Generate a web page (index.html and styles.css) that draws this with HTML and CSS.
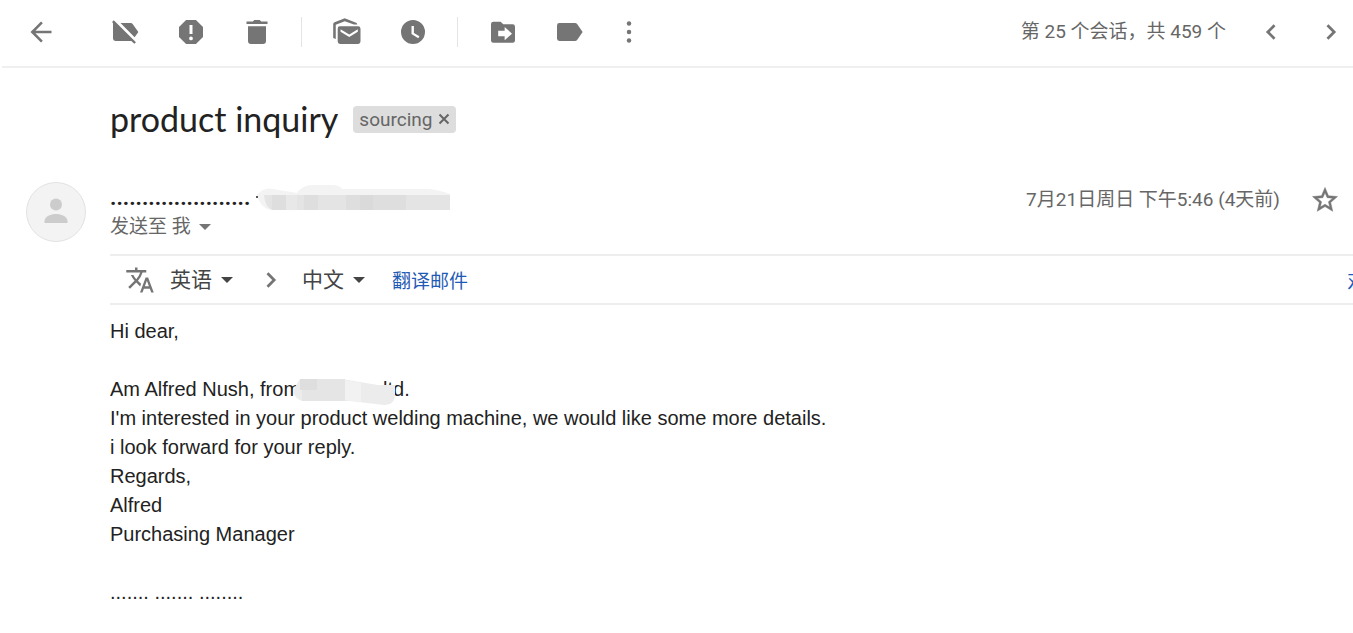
FILE: index.html
```
<!DOCTYPE html>
<html lang="zh-CN">
	<head>
		<meta charset="utf-8">
		<title>product inquiry</title>
		<link rel="stylesheet" href="styles.css">
	</head>

	<body>
		<header class="toolbar">
			<button class="icon back" aria-label="返回">
				<svg viewBox="0 0 20 20"><path d="M17 9.100H6.300l4.900-4.900L10 3 3 10l7 7 1.200-1.200-4.900-4.900H17z"/></svg>
			</button>
			<div class="group">
				<button class="icon" aria-label="移除标签">
					<svg viewBox="0 0 20 20"><path d="M7 4h6.800q.8 0 1.300.7l3.800 5.300-2.500 3.500zM1.400 3.300 2.500 2.200 17.300 16.800 16.200 17.900 14.200 16H3.600Q2 16 2 14.400V4.100z"/></svg>
				</button>
				<button class="icon" aria-label="举报垃圾邮件">
					<svg viewBox="0 0 20 20"><path fill-rule="evenodd" d="M6.700 2h6.600L18 6.700v6.600L13.300 18H6.700L2 13.300V6.700zM9 5.400v6h2v-6zM10 13a1.250 1.250 0 1 0 0 2.500 1.250 1.250 0 0 0 0-2.500z"/></svg>
				</button>
				<button class="icon" aria-label="删除">
					<svg viewBox="0 0 20 20"><path d="M3 3h4.200l1-1h3.600l1 1H17v1.700H3zM4 6.200h12v9.800q0 2-2 2H6q-2 0-2-2z"/></svg>
				</button>
			</div>
			<span class="sep"></span>
			<div class="group">
				<button class="icon" aria-label="标记为未读">
					<svg viewBox="0 0 20 20"><path d="M.8 14V4.900q0-1 .9-1.400L8.500.9l7.600 3q.5.2.8 1.100h-2.300L8.500 2.800 2.500 5.200V14.700z"/><path fill-rule="evenodd" d="M5.200 6.200h12.200q1.600 0 1.600 1.600v8.600q0 1.600-1.600 1.600H5.400q-1.600 0-1.600-1.600V7.800q0-1.600 1.400-1.600zM5.700 8.200v1.600l5.800 3.600 5.700-3.600V8.200l-5.700 3.500z"/></svg>
				</button>
				<button class="icon" aria-label="延后">
					<svg viewBox="0 0 20 20"><path fill-rule="evenodd" d="M10 2a8 8 0 1 0 0 16 8 8 0 0 0 0-16zM9 6h1.600v4.600l3.700 2.200-.8 1.400L9 11.400z"/></svg>
				</button>
			</div>
			<span class="sep"></span>
			<div class="group">
				<button class="icon" aria-label="移至">
					<svg viewBox="0 0 20 20"><path fill-rule="evenodd" d="M3.600 3.100h4.800l1.800 1.800h6.200q1.600 0 1.600 1.600v9.100q0 1.600-1.600 1.600H3.600q-1.600 0-1.600-1.600V4.700q0-1.600 1.600-1.600zM6.800 9.200v3.700h4.300v2.600l4.900-4.400-4.900-4.400v2.500z"/></svg>
				</button>
				<button class="icon" aria-label="标签">
					<svg viewBox="0 0 20 20"><path d="M3.600 4h10.400q.9 0 1.400.7l3.700 5.300-3.700 5.300q-.5.7-1.400.7H3.600Q2 16 2 14.400V5.600Q2 4 3.600 4z"/></svg>
				</button>
			</div>
			<button class="icon more" aria-label="更多">
				<svg viewBox="0 0 20 20"><circle cx="10" cy="4.400" r="1.500"/><circle cx="10" cy="10" r="1.500"/><circle cx="10" cy="15.600" r="1.500"/></svg>
			</button>

			<div class="pager">
				<span>第 25 个会话，共 459 个</span>
				<button class="icon" aria-label="较新">
					<svg viewBox="0 0 20 20"><path d="M13 6.200 11.700 4.900 6.600 10l5.100 5.100 1.300-1.300L9.200 10z"/></svg>
				</button>
				<button class="icon" aria-label="较旧">
					<svg viewBox="0 0 20 20"><path d="M7 6.200 8.300 4.900l5.100 5.100-5.100 5.100L7 13.800l3.800-3.800z"/></svg>
				</button>
			</div>
		</header>

		<main class="mail">
			<div class="subject">
				<h1>product inquiry</h1>
				<span class="label">sourcing
					<button aria-label="移除 sourcing">
						<svg viewBox="0 0 12 12"><path d="m1.500 1.500 9 9m0-9-9 9"/></svg>
					</button>
				</span>
			</div>

			<div class="sender">
				<svg class="avatar" viewBox="0 0 60 60"><circle class="ring" cx="30" cy="30" r="29.500"/><circle cx="30" cy="22.500" r="6"/><path d="M18.500 41v-2c0-4.500 6.500-7 11.500-7s11.500 2.500 11.500 7v2z"/></svg>
				<div class="who">
					<div class="from">
						<b>......................</b>
						<svg class="blot" viewBox="0 0 194 26">
							<path fill="#f3f3f3" d="M1 10Q8 2 17 4l24 4q5-8 16-8h18q9 0 11 4h84q10 0 24 5v16H16Q5 24 1 10z"/>
							<path fill="#e4e4e4" d="M8 10h186v15H16Q9 22 8 10z"/>
							<path fill="#dedede" d="M16 10h14v15H16zM48 10h14v15H48zM90 10h60v15H90z"/>
							<path fill="#dadada" d="M104 10h13v15h-13z"/>
							<path fill="#e8e8e8" d="M30 10h11v15H30z"/>
							<circle cx="1" cy="12" r="1" fill="#222"/>
						</svg>
					</div>
					<button class="to">发送至 我
						<svg class="caret" viewBox="0 0 12 6"><path d="M0 0h12L6 6z"/></svg>
					</button>
				</div>
				<time class="date">7月21日周日 下午5:46 (4天前)</time>
				<button class="icon star" aria-label="加星标">
					<svg viewBox="0 0 24 24"><path d="m22 9.240-7.190-.62L12 2 9.190 8.630 2 9.240l5.460 4.730L5.820 21 12 17.270 18.180 21l-1.630-7.030zM12 15.400l-3.760 2.270 1-4.280-3.320-2.880 4.380-.38L12 6.100l1.710 4.040 4.380.38-3.320 2.880 1 4.280z"/></svg>
				</button>
			</div>

			<div class="translate">
				<svg class="lang" viewBox="0 0 24 24"><path d="m12.870 15.070-2.540-2.510.030-.030A17.500 17.500 0 0 0 14.070 6H17V4h-7V2H8v2H1v2h11.170a15.600 15.600 0 0 1-3.170 5.350A15.600 15.600 0 0 1 6.690 8h-2a17.600 17.600 0 0 0 2.980 4.560l-5.090 5.020L4 19l5-5 3.110 3.110zM18.500 10h-2L12 22h2l1.120-3h4.750L21 22h2zm-2.620 7 1.620-4.330L19.120 17z"/></svg>
				<div class="pick">
					<select aria-label="源语言"><option>英语</option></select>
					<svg class="caret" viewBox="0 0 12 6"><path d="M0 0h12L6 6z"/></svg>
				</div>
				<svg class="arrow" viewBox="0 0 20 20"><path d="M7 6.200 8.300 4.900l5.100 5.100-5.100 5.100L7 13.800l3.800-3.800z"/></svg>
				<div class="pick">
					<select aria-label="目标语言"><option>中文</option></select>
					<svg class="caret" viewBox="0 0 12 6"><path d="M0 0h12L6 6z"/></svg>
				</div>
				<a href="#">翻译邮件</a>
				<a class="off" href="#">对</a>
			</div>

			<div class="body">
				<p>Hi dear,</p>
				<p>
					Am Alfred Nush, from<span class="hidden"><svg viewBox="0 0 102 26"><path fill="#ececec" d="M6 0h42l36 6h17v9q0 11-11 11l-34-4H8Q-3 18 1 8z"/><path fill="#dedede" d="M6 0h17v11H6z"/><path fill="#e5e5e5" d="M23 0h28v22H8V11h15z"/><path fill="#f2f2f2" d="M51 1l16 3v19l-16-2z"/></svg></span>ltd.<br>
					I'm interested in your product welding machine, we would like some more details.<br>
					i look forward for your reply.<br>
					Regards,<br>
					Alfred<br>
					Purchasing Manager
				</p>
				<p>....... ....... ........</p>
			</div>
		</main>
	</body>
</html>
```
FILE: styles.css
```
body {
	margin: 0;
	background: #fff;
	color: #222;
	font-family: Roboto, "Noto Sans CJK SC", sans-serif;
	font-size: 19px;
}

button,
select {
	padding: 0;
	border: none;
	background: none;
	color: inherit;
	font: inherit;
	cursor: pointer;
}

svg {
	display: block;
	fill: #757575;
}

a {
	color: #1f5bb5;
	text-decoration: none;
}

.toolbar {
	display: flex;
	align-items: center;
	height: 64px;
	margin-left: 2px;
	padding: 0 7px 2px 24px;
	border-bottom: 2px solid #efefef;
}

.icon {
	flex: none;
	width: 30px;
	height: 30px;
}

.back {
	margin-right: 54px;
}

.group {
	display: flex;
	gap: 36px;
}

.sep {
	width: 1px;
	height: 30px;
	margin: 0 30px 0 29px;
	background: #e4e4e4;
}

.more {
	margin-left: 30px;
}

.pager {
	display: flex;
	align-items: center;
	gap: 30px;
	margin-left: auto;
	color: #666;
	line-height: 28px;
	white-space: nowrap;
}

.mail {
	padding-left: 110px;
}

.subject {
	display: flex;
	align-items: center;
	gap: 15px;
	margin-top: 26px;
}

h1 {
	margin: 0;
	font: 34px/50px Lato, sans-serif;
}

.label {
	display: flex;
	align-items: center;
	gap: 6px;
	padding: 0 6px;
	border-radius: 4px;
	background: #ddd;
	color: #666;
	line-height: 27px;
}

.label svg {
	width: 12px;
	height: 12px;
	stroke: #666;
	stroke-width: 2;
}

.sender {
	display: flex;
	align-items: flex-start;
	margin: 38px 13px 12px -84px;
}

.avatar {
	flex: none;
	width: 60px;
	height: 60px;
	margin-right: 24px;
	fill: #ccc;
}

.avatar .ring {
	fill: #f3f3f3;
	stroke: #e2e2e2;
}

.who {
	flex: 1;
}

.from {
	display: flex;
	gap: 6px;
	height: 31px;
	font-size: 22px;
	line-height: 31px;
}

.blot {
	width: 194px;
	height: 26px;
	margin-top: 3px;
}

.to {
	display: flex;
	align-items: center;
	gap: 8px;
	color: #666;
	line-height: 28px;
}

.caret {
	width: 12px;
	height: 6px;
}

.date {
	color: #666;
	line-height: 36px;
	white-space: nowrap;
}

.star {
	margin: 3px 0 0 30px;
}

.star svg {
	stroke: #757575;
	stroke-width: .4;
}

.translate {
	display: flex;
	align-items: center;
	height: 47px;
	padding-left: 15px;
	border-top: 2px solid #eee;
	border-bottom: 2px solid #eee;
	overflow: hidden;
}

.lang {
	width: 30px;
	height: 30px;
	margin-right: 15px;
}

.pick {
	display: flex;
	align-items: center;
	gap: 9px;
	color: #444;
	font-size: 21px;
}

.pick select {
	appearance: none;
}

.pick .caret {
	fill: #444;
}

.arrow {
	width: 30px;
	height: 30px;
	margin: 0 16px 0 23px;
}

.translate a {
	margin-left: 27px;
}

.translate .off {
	flex: 0 0 6px;
	min-width: 0;
	margin-left: auto;
	overflow: hidden;
}

.body {
	padding-top: 12px;
	font: 20px/29px "Liberation Sans", Arial, sans-serif;
}

.body p {
	margin: 0 0 29px;
}

/* blurred company name */
.hidden {
	display: inline-block;
	position: relative;
	width: 83px;
}

.hidden svg {
	position: absolute;
	left: -6px;
	bottom: -9px;
	width: 102px;
	height: 26px;
}
```
